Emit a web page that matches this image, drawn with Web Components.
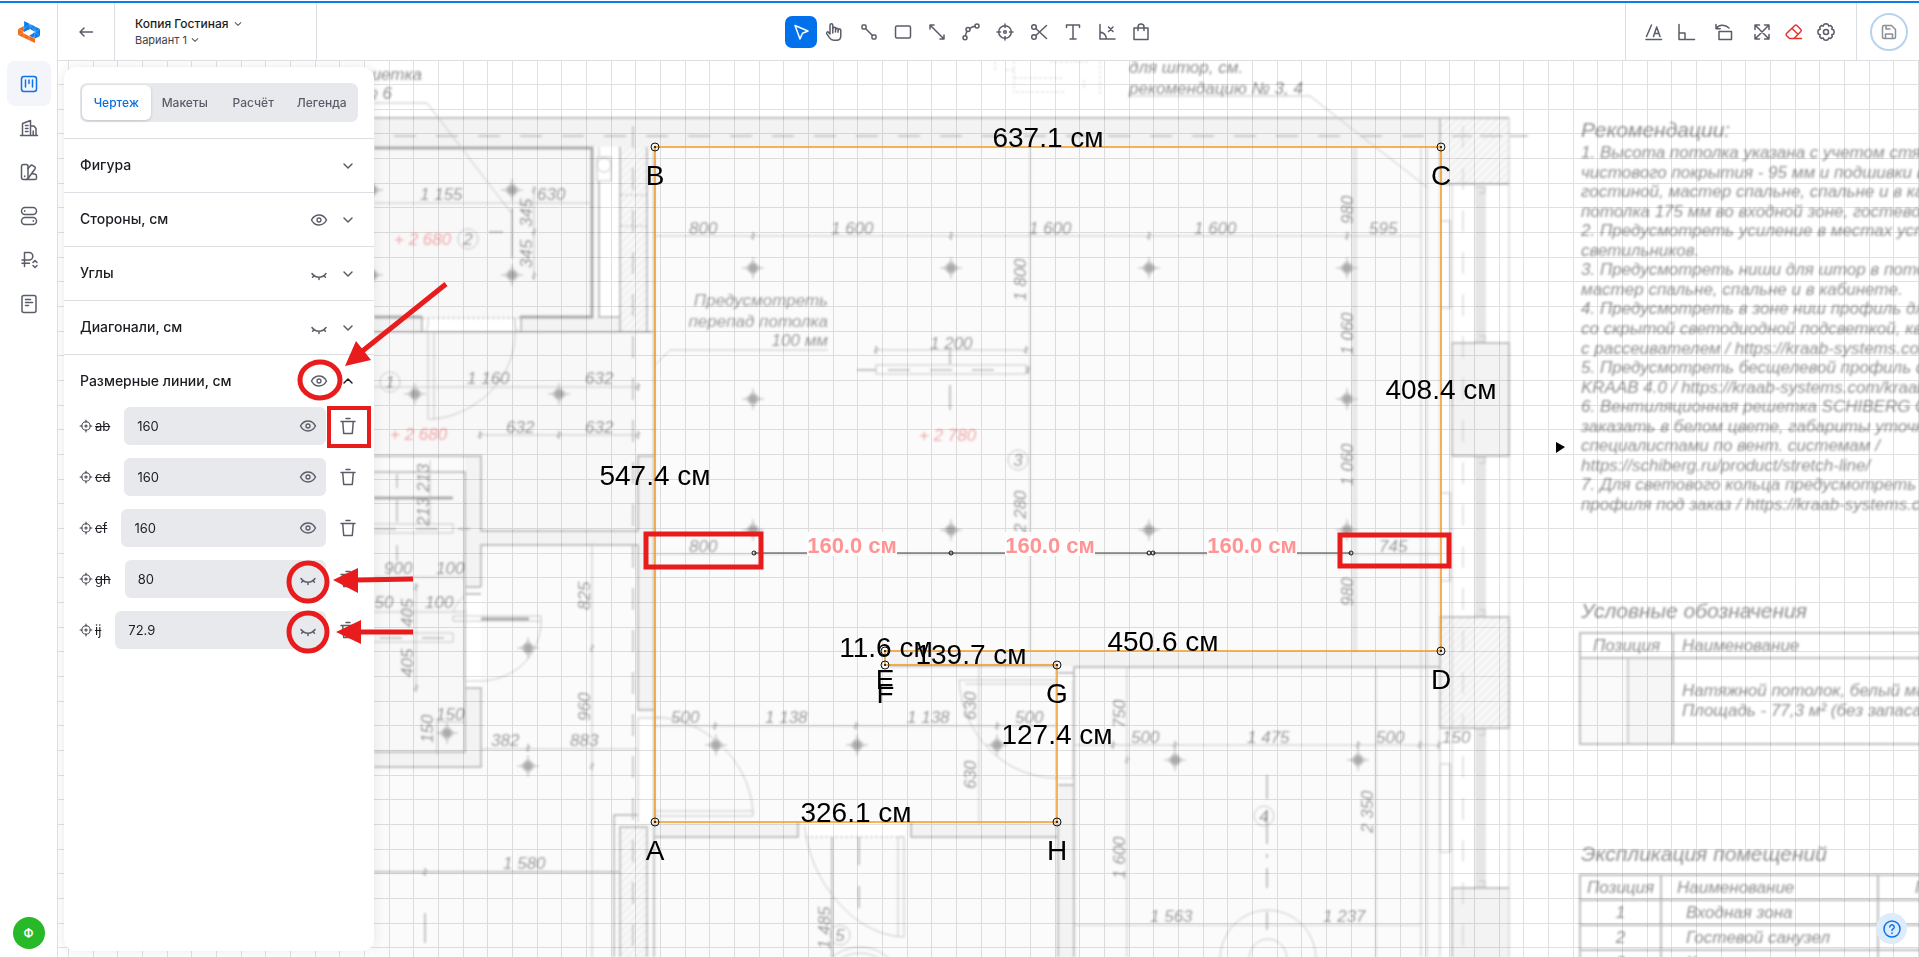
<!DOCTYPE html>
<html lang="ru">
<head>
<meta charset="utf-8">
<title>Копия Гостиная — чертёж</title>
<style>
  html, body { margin: 0; height: 100%; }
  body { background: #fff; color: #1c1d22; font: 400 14px/20px Inter, "Liberation Sans", sans-serif; overflow: hidden; }
</style>
</head>
<body>
<ceiling-app>
  <side-rail slot="rail"></side-rail>
  <top-bar slot="top"></top-bar>
  <plan-canvas slot="stage"></plan-canvas>
  <side-panel slot="panel">
    <fold-section title="Фигура"></fold-section>
    <fold-section title="Стороны, см" eye="on"></fold-section>
    <fold-section title="Углы" eye="off"></fold-section>
    <fold-section title="Диагонали, см" eye="off"></fold-section>
    <fold-section title="Размерные линии, см" eye="on" open>
      <size-row name="ab" value="160" eye="on"></size-row>
      <size-row name="cd" value="160" eye="on"></size-row>
      <size-row name="ef" value="160" eye="on"></size-row>
      <size-row name="gh" value="80" eye="off"></size-row>
      <size-row name="ij" value="72.9" eye="off"></size-row>
    </fold-section>
  </side-panel>
  <mark-layer slot="marks"></mark-layer>
  <help-button slot="help"></help-button>
</ceiling-app>

<script>
const ICONS = {
  back: '<path d="M16.500 10H4M8 6L4 10l4 4"/>',
  down: '<path d="M6 8l4 4 4-4"/>',
  up: '<path d="M6 12l4-4 4 4"/>',
  eye: '<path d="M2.500 10c1.800-3.300 4.500-5 7.500-5s5.700 1.700 7.500 5c-1.800 3.300-4.500 5-7.500 5s-5.700-1.700-7.500-5z"/><circle cx="10" cy="10" r="2" stroke-width="1.300"/>',
  lash: '<path d="M3 9.500c1.800 2.600 4.300 3.800 7 3.800s5.200-1.200 7-3.800M5.300 11.500l-1.700 1.700M10 13.300v2.200M14.700 11.500l1.700 1.700"/>',
  trash: '<path d="M3 5.500h14M8 2.500h4M4.700 5.500l1 12h8.600l1-12"/>',
  target: '<circle cx="10" cy="10" r="6"/><circle cx="10" cy="10" r="1.500"/><path d="M10 1.500v3M10 15.500v3M1.500 10h3M15.500 10h3"/>',
  board: '<rect x="2.500" y="2.500" width="15" height="15" rx="2.500"/><path d="M6.500 6v7M10 6v3.500M13.500 6v7"/>',
  city: '<path d="M1.500 17.500h17M3.500 17.500V5.500l8-3v15M11.500 8h3.500l2 2.500v7M6.500 7.500h2.500M6.500 10.500h2.500M6.500 13.500h2.500M14.200 13v4"/>',
  swatch: '<rect x="2.500" y="2.500" width="6.500" height="15" rx="2"/><path d="M9 6.500l2.500-2.800c.6-.6 1.400-.7 2-.3l2 1.300c.8.500 1 1.300.6 2L9 16.500M13 11.500l3.200.8c.8.200 1.300.8 1.300 1.600v2c0 .9-.7 1.600-1.600 1.600H7"/><path d="M5.700 14v.6"/>',
  toggles: '<rect x="2.500" y="1.500" width="15" height="7" rx="3.500"/><rect x="2.500" y="11.500" width="15" height="7" rx="3.500"/><path d="M5.700 4.800v.4M14.300 14.800v.4"/>',
  ruble: '<path d="M5.500 16.500V2.500h4.500a3.800 3.800 0 010 7.600H3M3 13.300h7.500M14 12.500l2-2 2 2M14 15.500l2 2 2-2"/>',
  doc: '<rect x="3" y="1.500" width="14" height="17" rx="2"/><path d="M6.500 5.500h5M6.500 8.500h7M6.500 11.500h3"/>',
  cursor: '<path d="M4 3.500l13 5.500-5.500 2.300L9 17z"/>',
  hand: '<path d="M7.800 11V3.200a1.400 1.400 0 00-2.800 0V12l-1.600-1.800c-1-.8-2.300.3-1.600 1.600l3 4.400c.9 1.300 2.200 2 4 2h2.700c2.600 0 4.300-1.700 4.300-4.300V8.200a1.200 1.200 0 00-2.400 0V7.400a1.200 1.200 0 00-2.500 0v-.8a1.300 1.300 0 00-2.700 0M10.500 7v3M13 7.800v2.500"/>',
  segment: '<rect x="3" y="3" width="4" height="4" rx="1"/><rect x="13" y="13" width="4" height="4" rx="1"/><path d="M7 7l6 6"/>',
  rect: '<rect x="2.500" y="4" width="15" height="12" rx="1.500"/>',
  arrow: '<path d="M3.500 3.500l13 13M3 7V3h4M17 13v4h-4"/>',
  curve: '<circle cx="4" cy="15.800" r="2"/><circle cx="7" cy="7.500" r="2"/><circle cx="16" cy="4" r="2"/><path d="M4.500 13.800c.2-2 .8-3.100 1.500-4.400M8.800 6.500c1.500-1.200 3.300-2 5.200-2.300"/>',
  aim: '<circle cx="10" cy="10" r="6.300"/><circle cx="10" cy="10" r="1.300"/><path d="M10 2v3.500M10 14.500V18M2 10h3.500M14.500 10H18"/>',
  cut: '<circle cx="5" cy="5" r="2.300"/><circle cx="5" cy="15" r="2.300"/><path d="M6.800 6.500L17.500 16.500M6.800 13.500L17.500 3.500"/>',
  text: '<path d="M3.500 5.500V3h13v2.500M10 3v14M7 17h6"/>',
  angle: '<path d="M3 2.500v14.500h15M3 10c3.500.5 6 3 6.500 7M11.500 5l4.500 4.500M16 5l-4.500 4.500"/>',
  bag: '<path d="M3 6h14v11.500H3zM7 8.500V5a3 3 0 016 0v3.500"/>',
  tilt: '<path d="M2 17.500h15.500M2.500 14.500L7.500 3M9.500 14.500L12.700 5l3.300 9.500M10.500 11.500h4.500"/>',
  corner: '<path d="M3 2.500V17.500h15.500M3 11h6v6.500"/>',
  rotate: '<rect x="5" y="9.500" width="12.500" height="8"/><path d="M2 6.500c3-4 9-4.500 13-.5M2 2.500v4.200h4.200"/>',
  expand: '<path d="M3 3l14 14M17 3L3 17M3 7.500V3h4.500M12.500 3H17v4.500M17 12.500V17h-4.500M7.500 17H3v-4.500"/>',
  eraser: '<path d="M5.500 16.500L2.500 13.500a1.500 1.500 0 010-2l8.300-8a1.500 1.500 0 012 0l4 4a1.500 1.500 0 010 2L10 16.500zM8 6.500l6 5.800M5.500 16.500h12"/>',
  gear: '<path d="M10 1.800l2 .4.700 1.900 1.900-.5 1.700 1.700-.5 1.900 1.900.8.400 2-.4 2-1.900.8.500 1.900-1.700 1.700-1.900-.5-.7 1.900-2 .4-2-.4-.7-1.900-1.900.5-1.700-1.700.5-1.900-1.900-.8-.4-2 .4-2 1.900-.8-.5-1.900 1.700-1.700 1.900.5.700-1.900z"/><circle cx="10" cy="10" r="2.500"/>',
  save: '<path d="M3.500 5A1.500 1.500 0 015 3.500h7.500l4 4V15a1.500 1.500 0 01-1.500 1.500H5A1.500 1.500 0 013.500 15zM6.500 16.500v-4.500h7v4.500M7 3.500v3.500h4"/>',
  help: '<circle cx="10" cy="10" r="8"/><path d="M7.800 8a2.200 2.200 0 114 1.300c-.8.800-1.800 1.100-1.800 2.200M10 14v.4"/>'
};

const define = (tag, css, html) => {
  customElements.define(tag, class extends HTMLElement {
    constructor() {
      super();
      this.attachShadow({ mode: 'open' });
    }
    connectedCallback() {
      const body = typeof html === 'function' ? html(this) : html;
      this.shadowRoot.innerHTML = `<style>${css}</style>${body}`;
    }
  });
};

define('ui-icon', `
  :host { display: block; width: 20px; height: 20px; }
  :host([small]) { width: 14px; height: 14px; }
  svg { display: block; width: 100%; height: 100%; fill: none; stroke: currentColor; stroke-width: 1.500; stroke-linecap: round; stroke-linejoin: round; }
`, el => `<svg viewBox="0 0 20 20" aria-hidden="true">${ICONS[el.getAttribute('name')]}</svg>`);

define('icon-button', `
  :host { display: block; }
  button { display: grid; place-items: center; width: 32px; height: 32px; padding: 0; border: 0; border-radius: 7px; background: none; color: inherit; cursor: pointer; }
  :host([flush]) button { width: 20px; height: 20px; }
  :host([active]) button { background: #0070eb; color: #fff; }
`, el => `<button type="button" aria-label="${el.getAttribute('label')}"><ui-icon name="${el.getAttribute('icon')}"></ui-icon></button>`);

define('ceiling-app', `
  :host { display: grid; grid-template: auto auto minmax(0, 1fr) / 58px minmax(0, 1fr); height: 100vh; color: #5a5d68; }
  .strip { grid-column: 1 / -1; height: 2px; margin-top: 1px; background: #0a7cee; }
  .rail { grid-row: 2 / 4; border-right: 1px solid #dcdee3; box-sizing: border-box; display: flex; }
  .top { border-bottom: 1px solid #dcdee3; }
  .stage { position: relative; overflow: hidden; display: flex; padding: 6px; box-sizing: border-box; }
  .under, .over { position: absolute; inset: 0; display: flex; }
  .over { pointer-events: none; }
  .panel { position: relative; display: flex; }
  .help { position: absolute; right: 12px; bottom: 13px; }
`, `
  <div class="strip"></div>
  <div class="rail"><slot name="rail"></slot></div>
  <div class="top"><slot name="top"></slot></div>
  <main class="stage">
    <div class="under"><slot name="stage"></slot></div>
    <div class="panel"><slot name="panel"></slot></div>
    <div class="over"><slot name="marks"></slot></div>
    <div class="help"><slot name="help"></slot></div>
  </main>
`);

const LOGO = `<svg width="24" height="24" viewBox="0 0 24 24" aria-hidden="true">
  <path fill="#0a7cee" d="M7 1l16 8v7l-6 3-5-3 4-3-5-3-4 2z"/>
  <path fill="#f26a1b" d="M7 6v5l-1 2 6 3 6 2v5L1 15v-6z"/>
  <path fill="#fff" d="M8 12l5-3 5 3-5 3z"/>
  <path fill="none" stroke="#fff" stroke-opacity=".45" stroke-width=".6" d="M7 1v8M13 4v5M18 7v5M1 9l6 3v6M12 16v5M1 15l6-3 5 4 6 2M7 9l6-5 5 8 5-3M17 19l1-7 5 4"/>
</svg>`;

define('side-rail', `
  :host { display: flex; flex: 1; flex-direction: column; align-items: center; padding-bottom: 8px; }
  .logo { display: grid; place-items: center; height: 58px; }
  nav { display: flex; flex-direction: column; flex: 1; }
  a { display: grid; place-items: center; width: 44px; height: 44px; border-radius: 8px; color: #5a5d68; }
  a.on { height: 45px; background: #f3f5fa; color: #0a74ea; }
  .user { display: grid; place-items: center; width: 32px; height: 32px; padding: 0; border: 0; border-radius: 50%; background: #27b927; color: #fff; font: 600 12px/16px Inter, sans-serif; }
`, `
  <div class="logo">${LOGO}</div>
  <nav>
    <a class="on" href="#draw" aria-label="Чертежи"><ui-icon name="board"></ui-icon></a>
    <a href="#objects" aria-label="Объекты"><ui-icon name="city"></ui-icon></a>
    <a href="#colors" aria-label="Материалы"><ui-icon name="swatch"></ui-icon></a>
    <a href="#parts" aria-label="Комплектующие"><ui-icon name="toggles"></ui-icon></a>
    <a href="#prices" aria-label="Цены"><ui-icon name="ruble"></ui-icon></a>
    <a href="#docs" aria-label="Документы"><ui-icon name="doc"></ui-icon></a>
  </nav>
  <button class="user" type="button">Ф</button>
`);

define('top-bar', `
  :host { display: flex; align-items: stretch; height: 57px; background: #fff; }
  div { display: flex; align-items: center; }
  .back { width: 57px; justify-content: center; border-right: 1px solid #dcdee3; box-sizing: border-box; }
  .names { width: 202px; box-sizing: border-box; padding-left: 20px; border-right: 1px solid #dcdee3; flex-direction: column; align-items: flex-start; justify-content: center; }
  .names button { display: flex; align-items: center; gap: 3px; height: 16px; padding: 0; border: 0; background: none; color: #1c1d22; font: 500 12px/16px Inter, sans-serif; }
  .names button + button { gap: 1px; color: #3f424c; font-size: 11px; font-weight: 400; }
  .names ui-icon { color: #5a5d68; }
  .tools { flex: 1; justify-content: center; gap: 2px; }
  .view { border-left: 1px solid #dcdee3; padding: 0 14px 0 12px; gap: 6px; }
  .save { width: 63px; box-sizing: border-box; border-left: 1px solid #dcdee3; justify-content: center; padding-left: 2px; }
  .save button { display: grid; place-items: center; width: 38px; height: 38px; padding: 0; border: 2px solid #b9d2ee; border-radius: 50%; background: #fff; color: #8c8f98; }
  .red { color: #e3342c; }
`, `
  <div class="back"><icon-button icon="back" label="Назад"></icon-button></div>
  <div class="names">
    <button type="button">Копия Гостиная <ui-icon small name="down"></ui-icon></button>
    <button type="button">Вариант 1 <ui-icon small name="down"></ui-icon></button>
  </div>
  <div class="tools" role="toolbar">
    <icon-button active icon="cursor" label="Выбор"></icon-button>
    <icon-button icon="hand" label="Рука"></icon-button>
    <icon-button icon="segment" label="Отрезок"></icon-button>
    <icon-button icon="rect" label="Прямоугольник"></icon-button>
    <icon-button icon="arrow" label="Размерная линия"></icon-button>
    <icon-button icon="curve" label="Кривая"></icon-button>
    <icon-button icon="aim" label="Светильник"></icon-button>
    <icon-button icon="cut" label="Разрез"></icon-button>
    <icon-button icon="text" label="Текст"></icon-button>
    <icon-button icon="angle" label="Угол"></icon-button>
    <icon-button icon="bag" label="Товары"></icon-button>
  </div>
  <div class="view">
    <div><icon-button icon="tilt" label="Наклон текста"></icon-button><icon-button icon="corner" label="Прямой угол"></icon-button></div>
    <div><icon-button icon="rotate" label="Повернуть"></icon-button></div>
    <div><icon-button icon="expand" label="Вписать"></icon-button><icon-button class="red" icon="eraser" label="Стереть"></icon-button><icon-button icon="gear" label="Настройки"></icon-button></div>
  </div>
  <div class="save"><button type="button" aria-label="Сохранить"><ui-icon name="save"></ui-icon></button></div>
`);

define('side-panel', `
  :host { display: block; width: 310px; box-sizing: border-box; border-radius: 12px; background: #fff; box-shadow: 0 0 12px rgba(40, 44, 60, .1); overflow: hidden; }
  .tabs { display: flex; margin: 16px; padding: 2px; border-radius: 7px; background: #e8e9ed; }
  button { flex: 1 1 0; min-width: 0; height: 35px; padding: 0; border: 0; border-radius: 6px; background: none; color: #5a5d68; font: 500 12px/16px Inter, sans-serif; white-space: nowrap; }
  button[aria-selected=true] { background: #fff; color: #0a6fe0; box-shadow: 0 1px 3px rgba(40, 44, 60, .2); }
`, `
  <div class="tabs" role="tablist">
    <button type="button" role="tab" aria-selected="true">Чертеж</button>
    <button type="button" role="tab" aria-selected="false">Макеты</button>
    <button type="button" role="tab" aria-selected="false">Расчёт</button>
    <button type="button" role="tab" aria-selected="false">Легенда</button>
  </div>
  <slot></slot>
`);

define('fold-section', `
  :host { display: block; border-top: 1px solid #dcdee3; }
  header { display: flex; align-items: center; gap: 9px; height: 53px; padding: 0 16px; }
  h2 { flex: 1; margin: 0; padding-bottom: 1px; color: #1c1d22; font: 450 14px/20px Inter, sans-serif; }
  .rows { display: flex; flex-direction: column; gap: 13px; padding: 0 16px; }
  :host([open]) header { height: 52px; }
  :host([open]) .fold { color: #1c1d22; }
`, el => {
  const eye = el.getAttribute('eye');
  return `<header><h2>${el.getAttribute('title')}</h2>
    ${eye ? `<icon-button flush icon="${eye === 'on' ? 'eye' : 'lash'}" label="Видимость"></icon-button>` : ''}
    <icon-button class="fold" flush icon="${el.hasAttribute('open') ? 'up' : 'down'}" label="Свернуть"></icon-button></header>
    <div class="rows"><slot></slot></div>`;
});

define('size-row', `
  :host { display: flex; align-items: center; height: 38px; color: #5a5d68; }
  label { display: flex; align-items: center; margin-right: 14px; color: #3f424c; font: 400 13px/16px Inter, sans-serif; }
  label ui-icon { margin: 0 2px 0 -1px; }
  s { color: #1c1d22; }
  .field { flex: 1; display: flex; align-items: center; min-width: 0; height: 38px; padding: 0 8px 0 13px; border-radius: 6px; background: #e8e9ed; }
  input { flex: 1; min-width: 0; padding: 0; border: 0; outline: 0; background: none; color: #1c1d22; font: 400 13px/16px Inter, sans-serif; }
  .del { margin-left: 12px; }
`, el => `<label for="v"><ui-icon small name="target"></ui-icon><s>${el.getAttribute('name')}</s></label>
  <div class="field"><input id="v" value="${el.getAttribute('value')}">
  <icon-button flush icon="${el.getAttribute('eye') === 'on' ? 'eye' : 'lash'}" label="Видимость"></icon-button></div>
  <icon-button class="del" flush icon="trash" label="Удалить"></icon-button>`);

define('help-button', `
  :host { display: block; }
  button { display: grid; place-items: center; width: 31px; height: 31px; padding: 0; border: 0; border-radius: 50%; background: #deebfa; color: #0a74ea; }
`, `<button type="button" aria-label="Помощь"><ui-icon name="help"></ui-icon></button>`);

/* Floor plan. All plan coordinates are in the drawing's own space; ORIGIN maps it onto the stage. */
const ORIGIN = 'translate(-58 -61)';
const t = (x, y, s, c = '') => `<text x="${x}" y="${y}" class="${c}">${s}</text>`;
const v = (x, y, s) => `<text transform="translate(${x} ${y}) rotate(-90)">${s}</text>`;
const box = (x1, y1, x2, y2, c = '') => `<rect x="${x1}" y="${y1}" width="${x2 - x1}" height="${y2 - y1}" class="${c}"/>`;
const p = (d, c = '') => `<path d="${d}" class="${c}"/>`;
const lamp = (x, y) => `<use href="#lamp" x="${x}" y="${y}"/>`;
const ring = (x, y, n) => `<circle cx="${x}" cy="${y}" r="10"/>${t(x, y + 6, n, 'ctr')}`;
const tick = (x, y) => p(`M${x} ${y - 4}v8M${x - 2} ${y + 2}l4-4`, 'mid');

const grid = () => {
  let d = '';
  for (let i = 0; i < 160; i++) d += `M${68 + Math.round(i * 74 / 3)} 61V2400`;
  for (let i = 0; i < 90; i++) d += `M58 ${84 + Math.round(i * 74 / 3)}H4000`;
  return `<path class="grid" d="${d}"/>`;
};

const NOTES = ['1. Высота потолка указана с учетом стяжки и', 'чистового покрытия - 95 мм и подшивки в', 'гостиной, мастер спальне, спальне и в кабинете', 'потолка 175 мм во входной зоне, гостевом',
  '2. Предусмотреть усиление в местах установки', 'светильников.', '3. Предусмотреть ниши для штор в потолке', 'мастер спальне, спальне и в кабинете.', '4. Предусмотреть в зоне ниш профиль для',
  'со скрытой светодиодной подсветкой, квадрат', 'с рассеивателем / https://kraab-systems.com', '5. Предусмотреть бесщелевой профиль с', 'KRAAB 4.0 / https://kraab-systems.com/kraab', '6. Вентиляционная решетка SCHIBERG С',
  'заказать в белом цвете, габариты уточнить', 'специалистами по вент. системам /', 'https://schiberg.ru/product/stretch-line/', '7. Для светового кольца предусмотреть', 'профиля под заказ / https://kraab-systems.com'];

const plan = () => [
  /* floors and walls */
  box(374, 118, 1509, 957, 'floor'), box(374, 118, 1440, 147, 'wall'), box(374, 147, 592, 317, 'room'), box(1440, 184, 1509, 957, 'blank'), box(1440, 118, 1509, 184, 'hatch'),
  box(374, 317, 422, 332, 'wall'), box(422, 319, 520, 331, 'blank'), box(520, 317, 648, 332, 'wall'), box(599, 147, 620, 317, 'blank'), box(620, 147, 647, 332, 'hatch'), box(374, 332, 638, 456, 'room'),
  box(465, 456, 481, 587, 'wall'), box(481, 456, 638, 531, 'room'), box(374, 472, 465, 752, 'room'), box(465, 594, 481, 688, 'blank'), box(465, 688, 481, 767, 'wall'), box(374, 752, 481, 767, 'wall'),
  box(638, 456, 653, 710, 'wall'), box(481, 531, 638, 545, 'wall'), box(638, 718, 653, 822, 'blank'), box(620, 827, 647, 970, 'hatch'), box(653, 822, 798, 837, 'wall'), box(805, 824, 903, 837, 'blank'), box(911, 822, 1058, 837, 'wall'),
  box(889, 652, 1440, 666, 'wall'), box(1058, 674, 1074, 780, 'blank'), box(1058, 785, 1074, 970, 'wall'),
  box(1452, 343, 1509, 456, 'wall'), box(1440, 617, 1509, 728, 'hatch'), box(1452, 888, 1509, 970, 'wall'),
  box(1475, 186, 1486, 343, 'bar'), box(1475, 456, 1486, 617, 'bar'), box(1475, 728, 1486, 888, 'bar'),
  '<g class="ink">',
  /* outlines */
  p('M374 118H1509M374 332H652M521 317V332M422 317V332M599 181V317H620V147M647 147V332H620V317', 'mid'),
  p('M374 148H592V317H520M374 317H422', 'heavy'),
  p('M422 318H520M620 195H647M620 226H647M805 837H903', 'dot'),
  p('M394 136H1440M1452 136h20M1480 136h22M1510 136h18M633 126V957', 'dash'),
  p('M1463 126V957', 'dash thin'),
  box(597, 157, 611, 181), '<circle cx="604" cy="165" r="7"/>', p('M599 147V157'),
  p('M428 333V419H434V333M515 318V333C515 380 475 415 434 419M428 318v8l-2 6M515 318v8l3 6'),
  p('M374 456H481V531H638V456H653M374 472H465V752H374M374 767H481V688H465M481 587V545H638V710H653M465 587H481M465 594H481', 'mid'),
  p('M374 498H453M481 619H529', 'heavy'), p('M374 524H453V533H374M374 633H453V642H374M453 616H541V621H453zM453 612C456 604 460 599 466 595M541 621C541 655 515 680 481 681H465'),
  p('M397 474v14M397 500v22M397 545v16M374 529H470M380 638H461', 'dash'),
  p('M638 718H660M638 718V822M653 717C700 717 748 755 753 811M655 811H753V816H655z'),
  p('M614 957V815H638M620 957V827H647V957M654 147V957M653 837H798V822M911 822V837H1057M1058 822V957M832 837V957', 'mid'),
  p('M859 837v28M859 886v22M425 913v30M1267 775v24M1267 812v32M1267 854v4M1267 868v20M1267 912v18', 'mid'),
  p('M805 826C808 875 850 935 904 937V837H898V937'),
  '<circle cx="860" cy="990" r="43"/><circle cx="860" cy="990" r="37"/>',
  p('M1074 957V667H1440M1057 673H1074M1058 785H1074V957M889 666H1057', 'mid'),
  p('M1057 680H959C962 735 1005 778 1057 778H1074M965 684H1057M1073 680V777'),
  p('M1421 147V957M1427 147V957M1440 184V221M1440 308V493M1440 581V617M1440 728V957M1452 184V957M1509 118V957'),
  p('M1440 118V184H1509M1452 343H1509V456H1452zM1440 617H1509V728H1440zM1452 957V888H1509', 'mid'),
  box(1440, 221, 1450, 308), box(1440, 493, 1450, 581), box(1440, 764, 1450, 852),
  p('M1475 187h10v6h-6M1475 342h10v-6h-6M1475 457h10v6h-6M1475 616h10v-6h-6M1475 729h10v6h-6M1475 887h10v-6h-6'),
  '<ellipse cx="1268" cy="959" rx="48" ry="49"/><ellipse cx="1268" cy="959" rx="19" ry="20"/>',
  p('M995 62v10M1014 61v32M1014 78h50M1100 61v34M1006 70h8M1050 62h40M1084 80v10M1016 92h50', 'dot faint'),
  /* leaders and dimension lines */
  p('M374 103H427L512 214M1129 96H1310L1428 188M828 350H670L653 367'),
  p('M374 203H590M374 387H640M480 435H639M374 577H466M374 612H467M437 722H466M437 720V755M481 749H638M653 236H1421M653 554H1440M653 726H1057M1074 745H1440M1074 925H1421M876 350H1027M534 189V277M430 460V525M416 587V689M592 543V957M979 667V824M1030 147V650M1127 667V957M1376 667V957M1353 147V652M1356 147V652'),
  p('M374 872H620', 'mid'), p('M512 208V258M489 232h14M857 370h19M950 350v14M950 385v25', 'mid'),
  box(876, 365, 1026, 374), p('M888 370H1014', 'dash'),
  tick(534, 190), tick(534, 232), tick(534, 276), tick(480, 435), tick(559, 435), tick(638, 435), tick(638, 387), tick(753, 236), tick(951, 236), tick(1149, 236), tick(1347, 236), tick(876, 350), tick(1026, 350), tick(1028, 370),
  tick(592, 648), tick(592, 766), tick(528, 748), tick(425, 872), tick(715, 726), tick(856, 726), tick(997, 726), tick(416, 587), tick(416, 688), tick(1113, 745), tick(1175, 745), tick(1358, 745), tick(1420, 745), tick(1439, 745), tick(1127, 760),
  ring(468, 239, 2), ring(390, 382, 1), ring(1018, 460, 3), ring(1264, 816, 4), ring(840, 935, 5),
  '</g>',
  [[512, 190], [512, 275], [415, 394], [559, 394], [753, 268], [951, 268], [1149, 268], [1347, 268], [753, 399], [1347, 399], [753, 530], [951, 530], [1149, 530], [1347, 530], [528, 648], [528, 766], [447, 733], [716, 745], [857, 745], [997, 745], [1175, 760], [1358, 760], [372, 190], [372, 275]].map(a => lamp(...a)).join(''),
  /* dimension figures */
  t(422, 80, 'решетка', 'end'), t(392, 99, '№ 6', 'end'), t(420, 200, '1 155'), t(537, 200, '630'), t(467, 384, '1 160'), t(585, 384, '632'), t(506, 433, '632'), t(585, 433, '632'),
  t(384, 574, '900'), t(436, 574, '100'), t(365, 608, '150'), t(425, 608, '100'), t(436, 720, '150'), t(491, 746, '382'), t(570, 746, '883'), t(503, 869, '1 580'),
  t(689, 234, '800'), t(831, 234, '1 600'), t(1029, 234, '1 600'), t(1194, 234, '1 600'), t(1369, 234, '595'), t(930, 349, '1 200'), t(689, 552, '800'), t(1379, 552, '745'),
  t(671, 723, '500'), t(765, 723, '1 138'), t(907, 723, '1 138'), t(1015, 723, '500'), t(1131, 743, '500'), t(1247, 743, '1 475'), t(1376, 743, '500'), t(1442, 743, '150'), t(1150, 922, '1 563'), t(1323, 922, '1 237'),
  v(532, 227, '345'), v(532, 268, '345'), v(429, 492, '213'), v(429, 526, '213'), v(413, 627, '405'), v(413, 677, '405'), v(590, 610, '825'), v(590, 721, '960'), v(433, 743, '150'), v(830, 949, '1 485'),
  v(1026, 301, '1 800'), v(1026, 533, '2 280'), v(1353, 224, '980'), v(1353, 355, '1 060'), v(1353, 486, '1 060'), v(1353, 606, '980'), v(976, 720, '630'), v(976, 789, '630'), v(1125, 728, '750'), v(1125, 879, '1 600'), v(1373, 833, '2 350'),
  t(828, 306, 'Предусмотреть', 'end'), t(828, 327, 'перепад потолка', 'end'), t(828, 346, '100 мм', 'end'), t(1129, 73, 'для штор, см.'), t(1129, 94, 'рекомендацию № 3, 4'),
  t(394, 245, '+ 2 680', 'red'), t(390, 440, '+ 2 680', 'red'), t(919, 441, '+ 2 780', 'red'),
  /* notes */
  t(1581, 137, 'Рекомендации:', 'head'), NOTES.map((s, i) => t(1581, 158 + Math.round(i * 176 / 9), s, 'note')).join(''),
  t(1581, 618, 'Условные обозначения', 'head'), t(1581, 861, 'Экспликация помещений', 'head')
].join('');

const tables = `
<foreignObject x="1579" y="632" width="600" height="120"><table xmlns="http://www.w3.org/1999/xhtml" class="legend">
  <tr><th>Позиция</th><th>Наименование</th></tr>
  <tr><td class="swatch"></td><td>Натяжной потолок, белый матовый<br>Площадь - 77,3 м² (без запаса)</td></tr></table></foreignObject>
<foreignObject x="1579" y="874" width="600" height="200"><table xmlns="http://www.w3.org/1999/xhtml" class="rooms">
  <tr><th>Позиция</th><th>Наименование</th><th>Площадь</th></tr>
  <tr><td>1</td><td>Входная зона</td><td></td></tr>
  <tr><td>2</td><td>Гостевой санузел</td><td></td></tr>
  <tr><td>3</td><td>Кухня-гостиная</td><td></td></tr></table></foreignObject>`;

const PTS = { A: [655, 822], B: [655, 147], C: [1441, 147], D: [1441, 651], E: [885, 651], F: [885, 665], G: [1057, 665], H: [1057, 822] };
const shape = () => {
  const big = (x, y, s) => t(x, y, s, 'big');
  const pts = Object.entries(PTS);
  const out = [`<polygon class="contour" points="${pts.map(([, q]) => q.join()).join(' ')}"/>`];
  out.push(p('M754 553H1148M1153 553H1351', 'dim'));
  [[852, 553], [1050, 553], [1252, 553]].forEach(([x, y]) => out.push(box(x - 45, y - 21, x + 45, y + 3, 'plate'), t(x, y, '160.0 см', 'pink')));
  [754, 951, 1149, 1153, 1351].forEach(x => out.push(`<circle class="pin" cx="${x}" cy="553" r="2"/>`));
  out.push(big(1048, 147, '637.1 см'), big(655, 485, '547.4 см'), big(1441, 399, '408.4 см'), big(1163, 651, '450.6 см'), big(971, 664, '139.7 см'), big(886, 657, '11.6 см'), big(1057, 744, '127.4 см'), big(856, 822, '326.1 см'));
  pts.forEach(([k, [x, y]]) => out.push(`<circle class="pin" cx="${x}" cy="${y}" r="4"/><circle cx="${x}" cy="${y}" r="1"/>`, big(x, y + 38, k)));
  out.push('<path d="M1556 442l9 5-9 6z"/>');
  return out.join('');
};

define('plan-canvas', `
  :host { display: block; flex: 1; background: #fff; }
  svg { display: block; width: 100%; height: 100%; }
  .floor { fill: #fbfbfb; } .room { fill: #f8f8f8; } .wall { fill: #f3f3f3; } .blank { fill: #fff; } .bar { fill: #e6e6e6; } .hatch { fill: url(#hatch); }
  .plan text { font: italic 17px "Liberation Sans", Arial, sans-serif; fill: #8f8f8f; stroke: none; }
  .plan text.end { text-anchor: end; } .plan text.ctr { text-anchor: middle; }
  .plan text.red { fill: #f2a0a3; } .plan text.head { font-size: 21px; }
  .ink { fill: none; stroke: #c2c2c2; } .ink .mid { stroke: #bdbdbd; stroke-width: 2; } .ink .heavy { stroke: #a8a8a8; stroke-width: 3; }
  .ink .dot { stroke: #b0b0b0; stroke-dasharray: 3 2; } .ink .dot.faint { stroke: #d4d4d4; }
  .ink .dash { stroke: #c6c6c6; stroke-width: 2; stroke-dasharray: 22 20; } .ink .dash.thin { stroke-width: 1; }
  .grid { fill: none; stroke: #000; stroke-opacity: .12; shape-rendering: crispEdges; }
  .contour { fill: none; stroke: #f39a20; stroke-width: 1.500; }
  .dim { fill: none; stroke: #444; }
  .plate { fill: #fdfdfd; }
  .pin { fill: none; stroke: #111; }
  .big { font: 28px "Liberation Sans", Arial, sans-serif; text-anchor: middle; }
  .pink { font: 700 22px "Liberation Sans", Arial, sans-serif; text-anchor: middle; fill: #ff9494; }
  table { border-collapse: collapse; table-layout: fixed; color: #8f8f8f; font: italic 17px/20px "Liberation Sans", Arial, sans-serif; }
  th, td { box-sizing: border-box; border: 2px solid #bdbdbd; padding: 0; font-weight: 400; text-align: left; vertical-align: middle; }
  .legend { width: 520px; }
  .legend th { height: 25px; } .legend td { height: 86px; }
  .legend th:first-child { width: 93px; text-align: center; }
  .legend th + th, .legend td + td { padding-left: 8px; }
  .swatch { background: linear-gradient(90deg, #fafafa 46px, #ccc 46px, #ccc 48px, #f6f6f6 48px); }
  .rooms { width: 520px; line-height: 18px; }
  .rooms th, .rooms td { height: 25px; }
  .rooms th:first-child { width: 81px; } .rooms th:first-child, .rooms td:first-child { text-align: center; }
  .rooms th:nth-child(2) { width: 217px; padding-left: 15px; } .rooms td:nth-child(2) { padding-left: 24px; } .rooms th:nth-child(3) { padding-left: 36px; }
`, () => `<svg role="img" aria-label="План помещения">
  <defs>
    <filter id="soft" filterUnits="userSpaceOnUse" x="0" y="0" width="2600" height="1600"><feGaussianBlur stdDeviation=".9"/></filter>
    <pattern id="hatch" width="8" height="8" patternUnits="userSpaceOnUse"><rect width="8" height="8" fill="#f8f8f8"/><path d="M-1 9L9-1" stroke="#dedede"/></pattern>
    <g id="lamp"><path stroke="#b4b4b4" d="M0-11V11M-11 0H11"/><path fill="#c9c9c9" d="M0-8L8 0 0 8-8 0z"/><circle r="4" fill="#ababab"/></g>
  </defs>
  <g transform="${ORIGIN}"><g class="plan" filter="url(#soft)">${plan()}${tables}</g>${grid()}${shape()}</g></svg>`);

define('mark-layer', `
  :host { display: block; flex: 1; }
  svg { display: block; width: 100%; height: 100%; }
  g { fill: none; stroke: #e81c1c; stroke-width: 5; }
  .tip { fill: #e81c1c; stroke: none; }
`, `<svg aria-hidden="true"><g transform="${ORIGIN}">
  <ellipse cx="320" cy="380" rx="20" ry="18"/><circle cx="308" cy="582" r="19"/><circle cx="308" cy="632" r="19"/>
  <rect x="329" y="408" width="40" height="38" stroke-width="4"/>
  <rect x="646" y="534" width="115" height="33"/><rect x="1340" y="535" width="109" height="31"/>
  <path d="M446 284L360 353M413 579L356 580M413 632H358"/>
  <path class="tip" d="M345 366l11-25 15 19zM333 580l25-12v25zM336 632l25-12v24z"/>
</g></svg>`);
</script>
</body>
</html>
